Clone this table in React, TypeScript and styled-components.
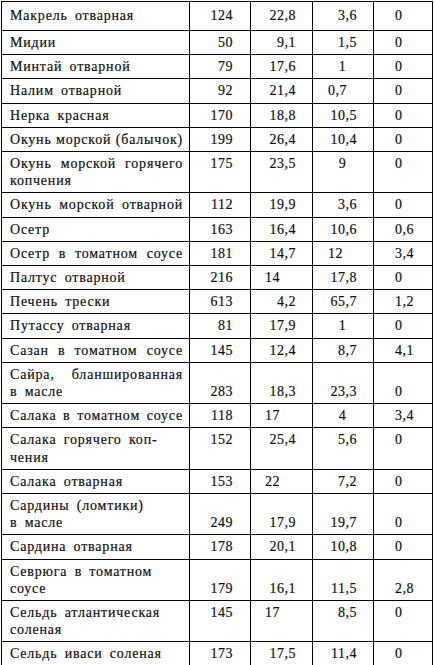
import React from "react";
import styled, { createGlobalStyle } from "styled-components";

const GlobalStyle = createGlobalStyle`
  html, body {
    margin: 0;
    padding: 0;
    background: #ffffff;
  }
`;

const Page = styled.div`
  padding: 1px 0 0 1px;
  width: 434px;
  box-sizing: border-box;
  font-family: "Liberation Serif", serif;
  font-size: 14px;
  line-height: 17.2px;
  color: #111;
  -webkit-text-stroke: 0.2px #111;
`;

const Sheet = styled.div`
  display: grid;
  grid-template-columns: 187px 60px 61px 60px 58px;
  gap: 1px;
  padding: 1px;
  width: max-content;
  background: #000;
`;

const Row = styled.div`
  display: contents;
`;

type Align = "left" | "right" | "center";
type VAlign = "middle" | "top" | "bottom";

const Cell = styled.div<{ $tall?: boolean }>`
  background: #ffffff;
  padding-top: ${(p) => (p.$tall ? "5.4px" : "3px")};
  padding-bottom: ${(p) => (p.$tall ? "5.4px" : "3px")};
  white-space: nowrap;
`;

const Label = styled(Cell)`
  padding-left: 8px;
  padding-right: 6px;
  letter-spacing: 0.8px;
  word-spacing: 3px;
`;

const LabelLine = styled.span<{ $justify?: boolean }>`
  display: block;
  text-align: ${(p) => (p.$justify ? "justify" : "left")};
  text-align-last: ${(p) => (p.$justify ? "justify" : "auto")};
  word-spacing: ${(p) => (p.$justify ? "0px" : "3px")};
  white-space: ${(p) => (p.$justify ? "normal" : "nowrap")};
`;

const justifyMap = { top: "flex-start", middle: "center", bottom: "flex-end" };

const Num = styled(Cell)<{ $align: Align; $valign: VAlign; $col: number }>`
  display: flex;
  flex-direction: column;
  justify-content: ${(p) => justifyMap[p.$valign]};
  text-align: ${(p) => p.$align};
  letter-spacing: 0.5px;
  padding-left: ${(p) => [10, 14, 15, 21][p.$col]}px;
  padding-right: ${(p) => [17, 16, 16, 4][p.$col]}px;
`;

type RowData = {
  label: string[];
  values: string[];
  valign?: VAlign;
  tall?: boolean;
};

// "~" at the end of a label line: the line is justified to the full column width.
// "<" before a value: left aligned, "^": centred, otherwise right aligned.
const rows: RowData[] = [
  { label: ["Макрель отварная"], values: ["124", "22,8", "3,6", "<0"], tall: true },
  { label: ["Мидии"], values: ["50", "9,1", "1,5", "<0"] },
  { label: ["Минтай отварной"], values: ["79", "17,6", "^1", "<0"] },
  { label: ["Налим отварной"], values: ["92", "21,4", "<0,7", "<0"] },
  { label: ["Нерка красная"], values: ["170", "18,8", "10,5", "<0"] },
  { label: ["Окунь морской (балычок)~"], values: ["199", "26,4", "10,4", "<0"] },
  {
    label: ["Окунь морской горячего~", "копчения"],
    values: ["175", "23,5", "^9", "<0"],
    valign: "top",
  },
  { label: ["Окунь морской отварной~"], values: ["112", "19,9", "3,6", "<0"] },
  { label: ["Осетр"], values: ["163", "16,4", "10,6", "<0,6"] },
  { label: ["Осетр в томатном соусе~"], values: ["181", "14,7", "<12", "<3,4"] },
  { label: ["Палтус отварной"], values: ["216", "<14", "17,8", "<0"] },
  { label: ["Печень трески"], values: ["613", "4,2", "65,7", "<1,2"] },
  { label: ["Путассу отварная"], values: ["81", "17,9", "^1", "<0"] },
  { label: ["Сазан в томатном соусе~"], values: ["145", "12,4", "8,7", "<4,1"] },
  {
    label: ["Сайра, бланшированная~", "в масле"],
    values: ["283", "18,3", "23,3", "<0"],
    valign: "bottom",
  },
  { label: ["Салака в томатном соусе~"], values: ["118", "<17", "^4", "<3,4"] },
  {
    label: ["Салака горячего коп-", "чения"],
    values: ["152", "25,4", "5,6", "<0"],
    valign: "top",
  },
  { label: ["Салака отварная"], values: ["153", "<22", "7,2", "<0"] },
  {
    label: ["Сардины (ломтики)", "в масле"],
    values: ["249", "17,9", "19,7", "<0"],
    valign: "bottom",
  },
  { label: ["Сардина отварная"], values: ["178", "20,1", "10,8", "<0"] },
  {
    label: ["Севрюга в томатном", "соусе"],
    values: ["179", "16,1", "11,5", "<2,8"],
    valign: "bottom",
  },
  {
    label: ["Сельдь атлантическая", "соленая"],
    values: ["145", "<17", "8,5", "<0"],
    valign: "top",
  },
  { label: ["Сельдь иваси соленая"], values: ["173", "17,5", "11,4", "<0"] },
];

function parse(v: string): { text: string; align: Align } {
  if (v.startsWith("<")) return { text: v.slice(1), align: "left" };
  if (v.startsWith("^")) return { text: v.slice(1), align: "center" };
  return { text: v, align: "right" };
}

export default function App() {
  return (
    <>
      <GlobalStyle />
      <Page>
        <Sheet>
          {rows.map((r, i) => (
            <Row key={i}>
              <Label $tall={r.tall}>
                {r.label.map((line, j) => {
                  const justify = line.endsWith("~");
                  return (
                    <LabelLine key={j} $justify={justify}>
                      {justify ? line.slice(0, -1) : line}
                    </LabelLine>
                  );
                })}
              </Label>
              {r.values.map((v, k) => {
                const { text, align } = parse(v);
                return (
                  <Num
                    key={k}
                    $tall={r.tall}
                    $col={k}
                    $align={align}
                    $valign={r.valign ?? "middle"}
                  >
                    <span>{text}</span>
                  </Num>
                );
              })}
            </Row>
          ))}
        </Sheet>
      </Page>
    </>
  );
}
